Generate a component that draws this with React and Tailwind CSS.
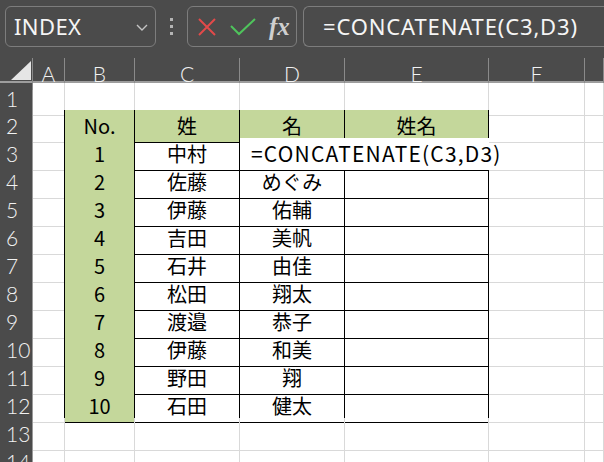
import React from 'react';

const COLS = ['A', 'B', 'C', 'D', 'E', 'F', ''];
const GRID = 'grid grid-cols-[33px_32px_70px_105px_105px_144px_96px_1fr]';

const data = [
  ['1', '中村', null],
  ['2', '佐藤', 'めぐみ'],
  ['3', '伊藤', '佑輔'],
  ['4', '吉田', '美帆'],
  ['5', '石井', '由佳'],
  ['6', '松田', '翔太'],
  ['7', '渡邉', '恭子'],
  ['8', '伊藤', '和美'],
  ['9', '野田', '翔'],
  ['10', '石田', '健太'],
];

const cellFont = "font-['Noto_Sans_CJK_JP',sans-serif] text-[20px] text-black";
const headFont = "font-['Lato','Noto_Sans',sans-serif] text-[21px] font-light text-[#f2f2f2]";

function RowHead({ n }) {
  return (
    <div className={`flex items-center border-r border-b border-r-[#9a9a9a] border-b-[#9a9a9a] bg-[#4b4b4b] pl-[6px] ${headFont}`}>
      {n}
    </div>
  );
}

function Cell({ className = '', children }) {
  return (
    <div className={`flex items-center justify-center border-r border-b border-[#d9d9d9] ${cellFont} ${className}`}>
      {children}
    </div>
  );
}

export default function App() {
  return (
    <div className="h-[462px] w-[604px] overflow-hidden bg-white">
      {/* Formula bar */}
      <div className="flex h-[58px] items-start bg-[#4b4b4b] pl-[5px] pt-[6px]">
        <div className="flex h-[41px] w-[151px] items-center justify-between rounded-[6px] border border-[#7d7d7d] pl-[8px] pr-[7px]">
          <span className="font-['Noto_Sans',sans-serif] text-[22px] tracking-[0.4px] text-[#f5f5f5]">INDEX</span>
          <svg width="12" height="8" viewBox="0 0 12 8" className="mt-[2px]">
            <polyline points="1,1 6,6 11,1" fill="none" stroke="#c4c4c4" strokeWidth="1.4" />
          </svg>
        </div>
        <div className="flex h-[41px] w-[31px] flex-col items-center justify-center gap-[4px]">
          <span className="h-[3px] w-[3px] bg-[#b4b4b4]" />
          <span className="h-[3px] w-[3px] bg-[#b4b4b4]" />
          <span className="h-[3px] w-[3px] bg-[#b4b4b4]" />
        </div>
        <div className="flex h-[41px] w-[110px] items-center rounded-[6px] border border-[#7d7d7d] pl-[9px]">
          <svg width="20" height="20" viewBox="0 0 20 20">
            <path d="M2 2 L18 18 M18 2 L2 18" stroke="#e24a4a" strokeWidth="2" fill="none" />
          </svg>
          <svg width="26" height="18" viewBox="0 0 26 18" className="ml-[13px]">
            <polyline points="1,8 9,16 25,1" stroke="#4fc45c" strokeWidth="2" fill="none" />
          </svg>
          <span className="ml-[13px] font-['Liberation_Serif',serif] text-[25px] font-bold italic leading-none text-[#cfcfcf]">fx</span>
        </div>
        <div className="ml-[6px] flex h-[41px] flex-1 items-center rounded-l-[6px] border border-r-0 border-[#7d7d7d] pl-[19px]">
          <span className="font-['Noto_Sans',sans-serif] text-[22px] tracking-[0.85px] text-[#f5f5f5]">=CONCATENATE(C3,D3)</span>
        </div>
      </div>

      {/* Column headers */}
      <div className={`${GRID} h-[25px] border-b-2 border-[#9d9d9d] bg-[#4b4b4b]`}>
        <div className="relative border-r border-[#8a8a8a]">
          <svg width="20" height="19" viewBox="0 0 20 19" className="absolute left-[11px] top-[3px]">
            <polygon points="0,19 20,19 20,0" fill="#e6e6e6" />
          </svg>
        </div>
        {COLS.map((c, i) => (
          <div key={i} className={`flex items-center justify-center border-r border-[#8a8a8a] ${headFont}`}>
            {c}
          </div>
        ))}
      </div>

      {/* Row 1 */}
      <div className={`${GRID} h-[27px]`}>
        <RowHead n="1" />
        <Cell />
        <Cell className="border-b-black" />
        <Cell className="border-b-black" />
        <Cell className="border-b-black" />
        <Cell className="border-b-black" />
        <Cell />
        <Cell />
      </div>

      {/* Row 2 - table header */}
      <div className={`${GRID} h-[28px]`}>
        <RowHead n="2" />
        <Cell className="border-r-black" />
        <Cell className="border-black bg-[#c4d79b]">No.</Cell>
        <Cell className="border-black bg-[#c4d79b]">姓</Cell>
        <Cell className="border-black bg-[#c4d79b]">名</Cell>
        <Cell className="border-black bg-[#c4d79b]">姓名</Cell>
        <Cell />
        <Cell />
      </div>

      {/* Data rows */}
      {data.map(([no, sei, mei], i) => (
        <div key={no} className={`${GRID} h-[28px]`}>
          <RowHead n={i + 3} />
          <Cell className="border-r-black" />
          <Cell className="border-black bg-[#c4d79b]">{no}</Cell>
          <Cell className="border-black">{sei}</Cell>
          {mei === null ? (
            <div className={`relative z-10 col-span-2 flex items-center overflow-visible whitespace-nowrap border-b border-black bg-white pl-[11px] ${cellFont} text-[21px] tracking-[1.2px]`}>
              =CONCATENATE(C3,D3)
            </div>
          ) : (
            <>
              <Cell className="border-black">{mei}</Cell>
              <Cell className="border-black" />
            </>
          )}
          <Cell />
          <Cell />
        </div>
      ))}

      {/* Rows 13-14 */}
      {[13, 14].map((n) => (
        <div key={n} className={`${GRID} h-[28px]`}>
          <RowHead n={n} />
          <Cell />
          <Cell />
          <Cell />
          <Cell />
          <Cell />
          <Cell />
          <Cell />
        </div>
      ))}
    </div>
  );
}
